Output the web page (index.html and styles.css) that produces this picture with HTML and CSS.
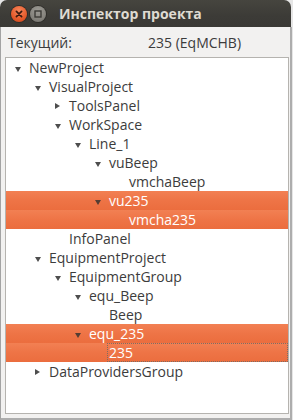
FILE: index.html
```html
<!DOCTYPE html>
<html>
<head>
<meta charset="utf-8">
<link rel="stylesheet" href="styles.css">
</head>
<body>
<div class="window">
  <div class="titlebar">
    <span class="wbtn close"><svg width="16" height="16" viewBox="0 0 16 16"><path d="M5.4 5.4L10.6 10.6M10.6 5.4L5.4 10.6" stroke="#3a1a10" stroke-width="1.7" stroke-linecap="round"/></svg></span>
    <span class="wbtn max"><svg width="16" height="16" viewBox="0 0 16 16"><rect x="5" y="5" width="6" height="6" fill="none" stroke="#3c3b37" stroke-width="1.4"/></svg></span>
    <span class="title">Инспектор проекта</span>
  </div>
  <div class="client">
    <div class="current"><span class="label">Текущий:</span><span class="value">235 (EqMCHB)</span></div>
    <div class="tree">
      <div class="row l0"><span class="exp open"></span><span class="cell">NewProject</span></div>
      <div class="row l1"><span class="exp open"></span><span class="cell">VisualProject</span></div>
      <div class="row l2"><span class="exp closed"></span><span class="cell">ToolsPanel</span></div>
      <div class="row l2"><span class="exp open"></span><span class="cell">WorkSpace</span></div>
      <div class="row l3"><span class="exp open"></span><span class="cell">Line_1</span></div>
      <div class="row l4"><span class="exp open"></span><span class="cell">vuBeep</span></div>
      <div class="row l5"><span class="exp"></span><span class="cell">vmchaBeep</span></div>
      <div class="row l4 sel"><span class="exp open"></span><span class="cell">vu235</span></div>
      <div class="row l5 sel"><span class="exp"></span><span class="cell">vmcha235</span></div>
      <div class="row l2"><span class="exp"></span><span class="cell">InfoPanel</span></div>
      <div class="row l1"><span class="exp open"></span><span class="cell">EquipmentProject</span></div>
      <div class="row l2"><span class="exp open"></span><span class="cell">EquipmentGroup</span></div>
      <div class="row l3"><span class="exp open"></span><span class="cell">equ_Beep</span></div>
      <div class="row l4"><span class="exp"></span><span class="cell">Beep</span></div>
      <div class="row l3 sel"><span class="exp open"></span><span class="cell">equ_235</span></div>
      <div class="row l4 sel"><span class="exp"></span><span class="cell focus">235</span></div>
      <div class="row l1"><span class="exp closed"></span><span class="cell">DataProvidersGroup</span></div>
    </div>
  </div>
</div>
</body>
</html>
```
FILE: styles.css
```css
html, body {
  margin: 0;
  padding: 0;
}
body {
  width: 293px;
  height: 420px;
  overflow: hidden;
  background: #e6e6e6;
  font-family: "Open Sans", "Noto Sans", "DejaVu Sans", sans-serif;
  font-size: 14px;
  color: #3c3c3c;
}
.window {
  width: 292px;
  height: 420px;
  display: flex;
  flex-direction: column;
}
.titlebar {
  height: 27px;
  width: 291px;
  flex: none;
  box-sizing: border-box;
  border-radius: 7px 7px 0 0;
  background: linear-gradient(#46453f, #3c3b37 60%, #3a3935);
  display: flex;
  align-items: center;
  padding-left: 11px;
}
.wbtn {
  width: 16px;
  height: 16px;
  border-radius: 50%;
  display: flex;
  flex: none;
  margin-top: 1px;
}
.wbtn svg {
  display: block;
}
.close {
  background: radial-gradient(circle at 50% 30%, #f7875c, #e55a2b 60%, #c9431b);
  box-shadow: 0 0 0 1px #2e2d29;
}
.max {
  margin-left: 3px;
  background: radial-gradient(circle at 50% 30%, #9c9a94, #85837d 60%, #6f6d68);
  box-shadow: 0 0 0 1px #2e2d29;
}
.title {
  margin-left: 13px;
  color: #dfdbd2;
  font-weight: bold;
  font-size: 14px;
  line-height: 27px;
}
.client {
  flex: 1;
  box-sizing: border-box;
  width: 292px;
  background: #f2f1f0;
  border-left: 1px solid #a3a3a3;
  border-right: 2px solid #adadad;
  border-bottom: 2px solid #adadad;
  display: flex;
  flex-direction: column;
}
.current {
  height: 30px;
  line-height: 31px;
  padding-left: 7px;
  display: flex;
  flex: none;
}
.label {
  width: 140px;
}
.tree {
  margin: 0 1px 0 4px;
  height: 357px;
  box-sizing: border-box;
  border: 1px solid #b5b3af;
  background: #ffffff;
  flex: none;
}
.row {
  height: 19px;
  line-height: 20px;
  display: flex;
  white-space: nowrap;
}
.l0 { padding-left: 9px; }
.l1 { padding-left: 29px; }
.l2 { padding-left: 49px; }
.l3 { padding-left: 69px; }
.l4 { padding-left: 89px; }
.l5 { padding-left: 109px; }
.exp {
  width: 12px;
  height: 19px;
  flex: none;
  position: relative;
}
.exp.open::before {
  content: "";
  position: absolute;
  left: 0;
  top: 9px;
  width: 0;
  height: 0;
  border-left: 3.5px solid transparent;
  border-right: 3.5px solid transparent;
  border-top: 5px solid #4e4e4e;
}
.exp.closed::before {
  content: "";
  position: absolute;
  left: 0;
  top: 7px;
  width: 0;
  height: 0;
  border-top: 3.5px solid transparent;
  border-bottom: 3.5px solid transparent;
  border-left: 5px solid #4e4e4e;
}
.sel .exp.open::before {
  border-top-color: #553d33;
}
.cell {
  flex: 1;
  padding-left: 2px;
  height: 19px;
}
.sel {
  background: linear-gradient(#f28053, #ee7446 50%, #eb6d3e);
  color: #ffffff;
}
.focus {
  outline: 1px dotted #7f6c63;
  outline-offset: -1px;
}
```
